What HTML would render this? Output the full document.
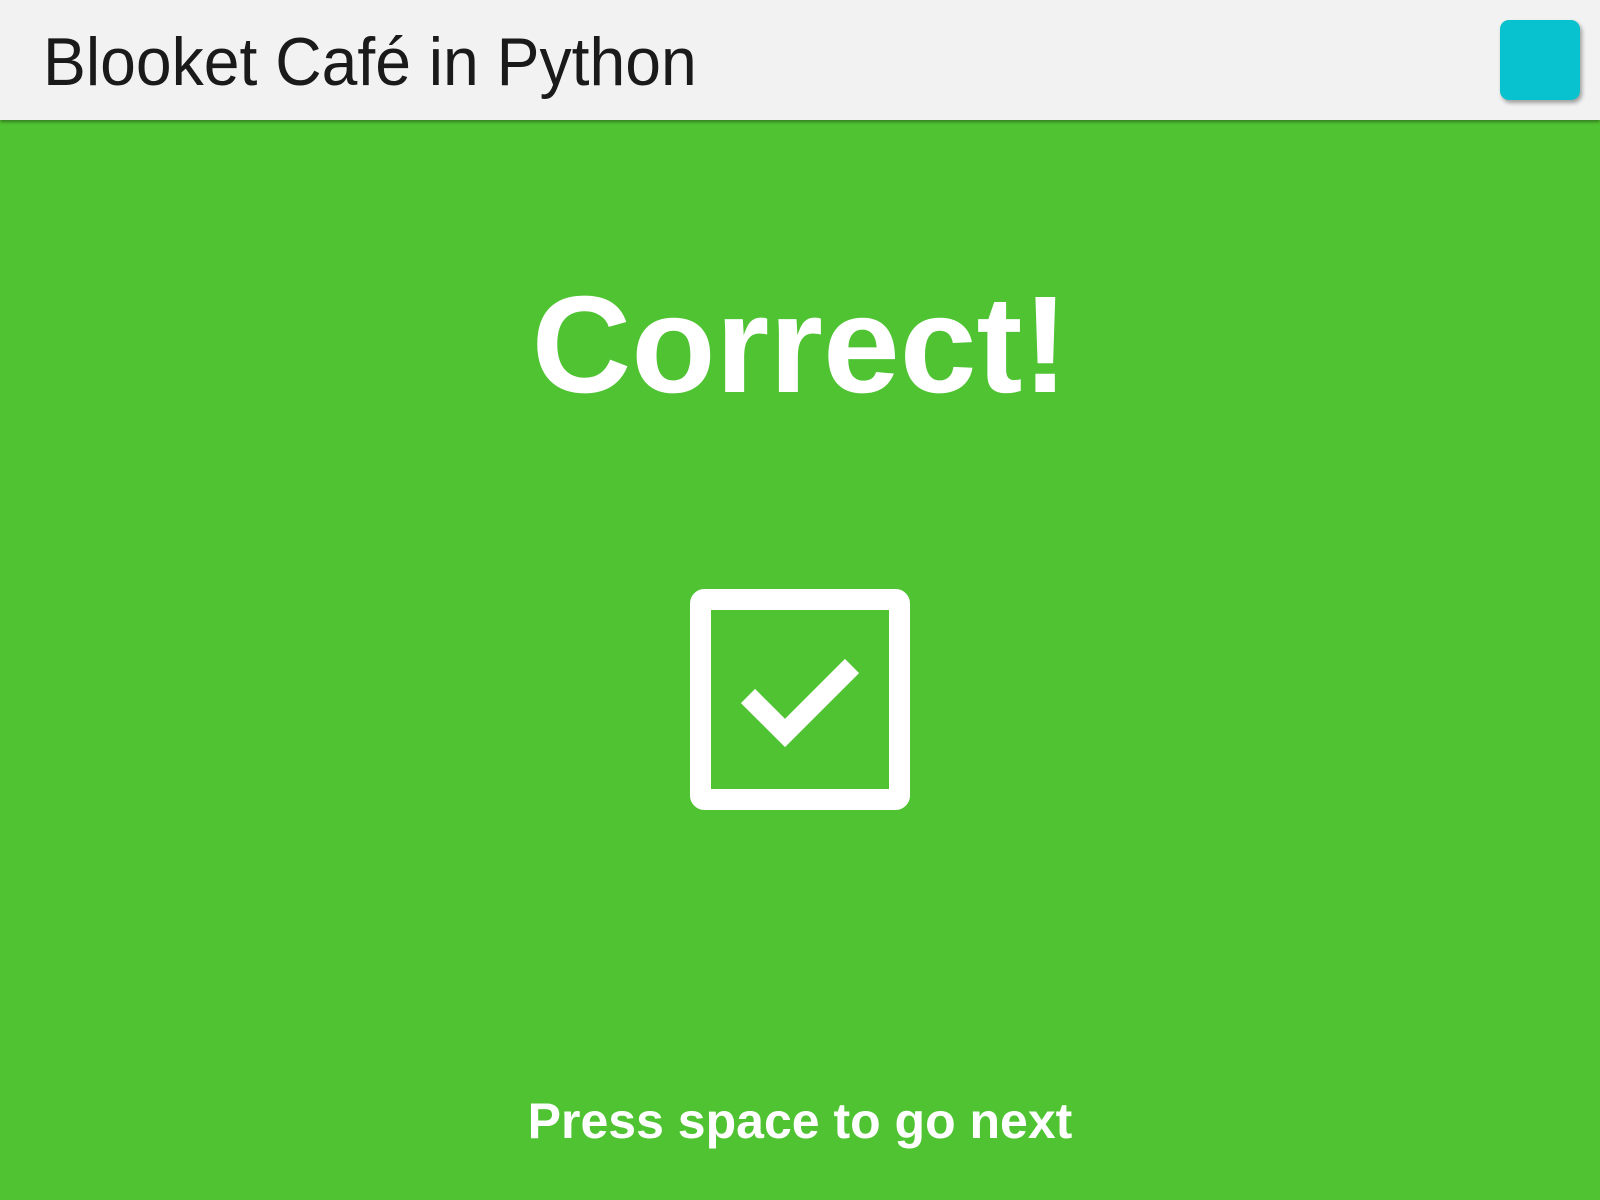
<!DOCTYPE html>
<html><head><style>
html,body{margin:0;padding:0;width:1600px;height:1200px;overflow:hidden;background:#4fc332;}
.hdr{position:absolute;left:0;top:0;width:1600px;height:120px;background:#f2f2f2;box-shadow:0 2px 3px rgba(0,0,0,.35);}
.title{position:absolute;left:43px;top:22px;font-family:"Liberation Sans",sans-serif;font-size:68px;line-height:80px;color:#1a1a1a;font-weight:normal;transform:scaleX(0.945);transform-origin:0 0;white-space:nowrap;}
.btn{position:absolute;left:1500px;top:20px;width:80px;height:80px;border-radius:9px;background:#08c2d0;box-shadow:2px 3px 4px rgba(0,0,0,.35);}
.correct{position:absolute;left:0;width:1600px;top:275px;text-align:center;font-family:"Liberation Sans",sans-serif;font-weight:bold;font-size:138px;line-height:140px;color:#fff;}
.next{position:absolute;left:0;width:1600px;top:1092px;text-align:center;font-family:"Liberation Sans",sans-serif;font-weight:bold;font-size:50px;line-height:58px;color:#fff;}
</style></head><body>
<div class="hdr"><div class="title">Blooket Café in Python</div><div class="btn"></div></div>
<div class="correct">Correct!</div>
<svg style="position:absolute;left:0;top:0" width="1600" height="1200">
<rect x="700.5" y="599.5" width="199" height="200" rx="4" fill="none" stroke="#fff" stroke-width="21"/>
<polyline points="748,696 785,733 852,666" fill="none" stroke="#fff" stroke-width="20" stroke-linecap="butt" stroke-linejoin="miter"/>
</svg>
<div class="next">Press space to go next</div>
</body></html>
